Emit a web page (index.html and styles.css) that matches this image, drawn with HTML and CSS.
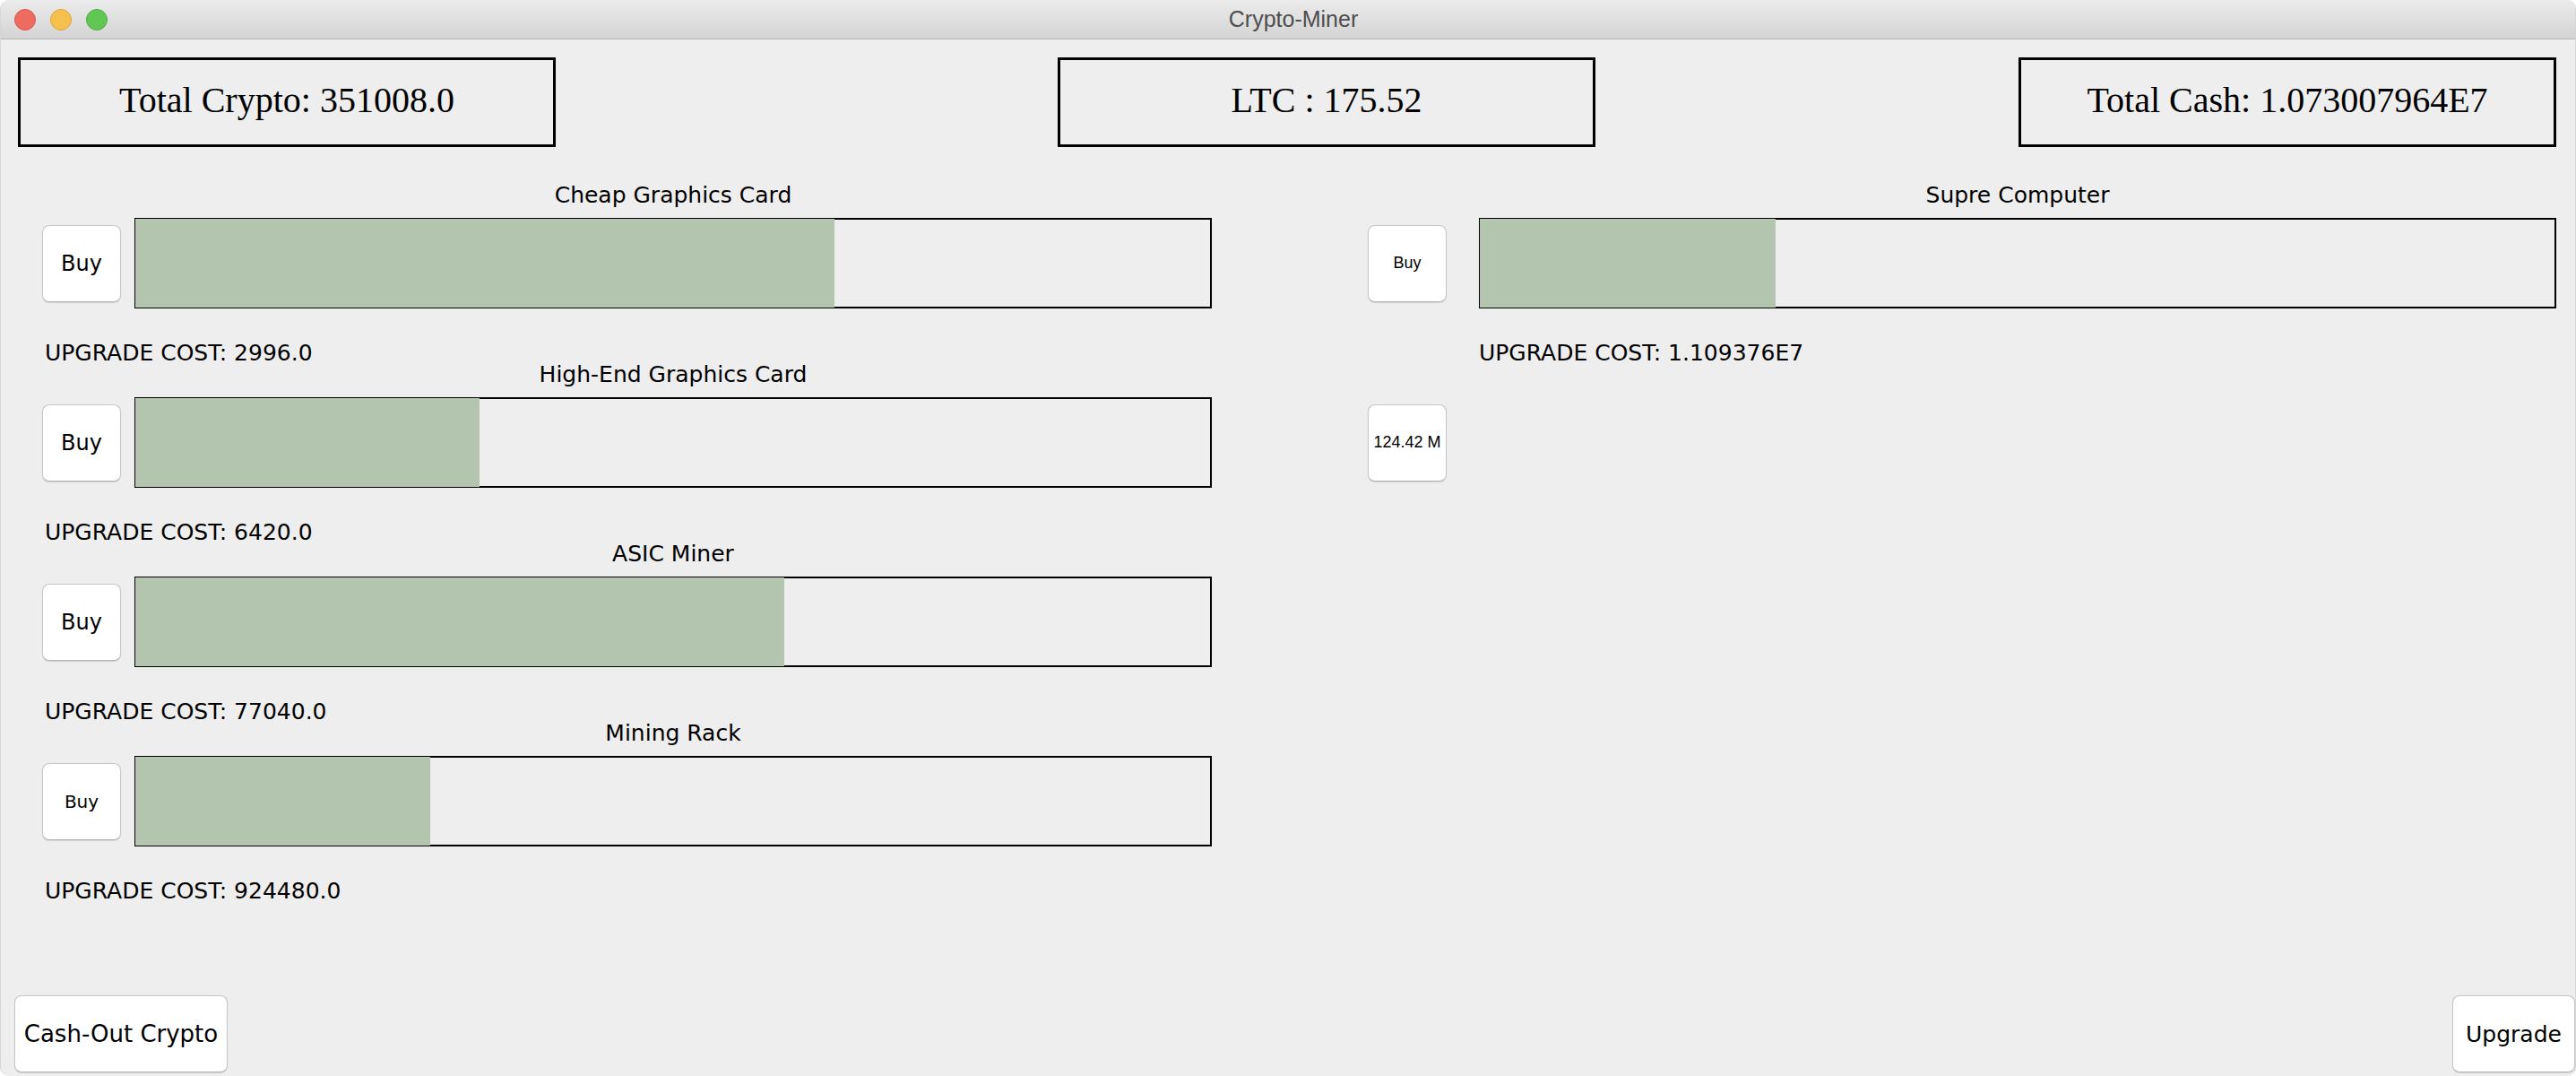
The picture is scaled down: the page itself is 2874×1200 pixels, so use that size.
FILE: index.html
```html
<!DOCTYPE html>
<html>
<head>
<meta charset="utf-8">
<title>Crypto-Miner</title>
<link rel="stylesheet" href="styles.css">
</head>
<body>
<div class="window">
  <header class="titlebar">
    <div class="lights">
      <span class="light red"></span>
      <span class="light yellow"></span>
      <span class="light green"></span>
    </div>
    <div class="title">Crypto-Miner</div>
    <div></div>
  </header>
  <div class="content">
    <div class="stats">
      <div class="stat">Total Crypto: 351008.0</div>
      <div class="stat stat-ltc">LTC : 175.52</div>
      <div class="stat stat-cash">Total Cash: 1.073007964E7</div>
    </div>
    <div class="main">
      <div class="col col-left">
        <div class="unit">
          <div class="unit-title">Cheap Graphics Card</div>
          <div class="unit-body">
            <button class="btn buy">Buy</button>
            <div class="bar"><div class="fill" style="width:65%"></div></div>
          </div>
          <div class="unit-cost">UPGRADE COST: 2996.0</div>
        </div>
        <div class="unit">
          <div class="unit-title">High-End Graphics Card</div>
          <div class="unit-body">
            <button class="btn buy">Buy</button>
            <div class="bar"><div class="fill" style="width:32%"></div></div>
          </div>
          <div class="unit-cost">UPGRADE COST: 6420.0</div>
        </div>
        <div class="unit">
          <div class="unit-title">ASIC Miner</div>
          <div class="unit-body">
            <button class="btn buy">Buy</button>
            <div class="bar"><div class="fill" style="width:60.3%"></div></div>
          </div>
          <div class="unit-cost">UPGRADE COST: 77040.0</div>
        </div>
        <div class="unit">
          <div class="unit-title">Mining Rack</div>
          <div class="unit-body">
            <button class="btn buy buy-small">Buy</button>
            <div class="bar"><div class="fill" style="width:27.4%"></div></div>
          </div>
          <div class="unit-cost">UPGRADE COST: 924480.0</div>
        </div>
      </div>
      <div class="col col-right">
        <div class="unit">
          <div class="unit-title">Supre Computer</div>
          <div class="unit-body">
            <button class="btn buy buy-sans">Buy</button>
            <div class="bar"><div class="fill" style="width:27.5%"></div></div>
          </div>
          <div class="unit-cost">UPGRADE COST: 1.109376E7</div>
        </div>
        <div class="unit">
          <div class="unit-title"></div>
          <div class="unit-body">
            <button class="btn buy buy-sans">124.42 M</button>
          </div>
        </div>
      </div>
    </div>
    <div class="footer">
      <button class="btn big cash">Cash-Out Crypto</button>
      <button class="btn big upgrade">Upgrade</button>
    </div>
  </div>
</div>
</body>
</html>
```
FILE: styles.css
```css
html, body {
  margin: 0;
  padding: 0;
}
body {
  background: #ffffff;
  width: 2874px;
  height: 1200px;
  overflow: hidden;
}
.window {
  width: 2874px;
  height: 1200px;
  box-sizing: border-box;
  background: #eeeeee;
  border-radius: 10px;
  overflow: hidden;
  display: flex;
  flex-direction: column;
  border-left: 1px solid #d6d6d6;
  border-right: 1px solid #d6d6d6;
}
.titlebar {
  height: 44px;
  box-sizing: border-box;
  flex: none;
  display: grid;
  grid-template-columns: 1fr auto 1fr;
  align-items: center;
  background: linear-gradient(#ebebeb, #d4d4d4);
  border-bottom: 1px solid #b4b4b4;
}
.lights {
  display: flex;
  gap: 16px;
  padding-left: 15px;
}
.light {
  width: 24px;
  height: 24px;
  box-sizing: border-box;
  border-radius: 50%;
}
.red { background: #ee6b60; border: 1px solid #d9574d; }
.yellow { background: #f6c04f; border: 1px solid #dea43a; }
.green { background: #62c655; border: 1px solid #4ead42; }
.title {
  font-family: "Liberation Sans", Arial, sans-serif;
  font-size: 25px;
  color: #4d4d4d;
  padding-left: 12px;
}
.content {
  flex: 1;
  display: flex;
  flex-direction: column;
}
.stats {
  display: flex;
  margin-top: 20px;
  padding-left: 19px;
}
.stat {
  width: 600px;
  height: 100px;
  box-sizing: border-box;
  border: 3px solid #000;
  padding-bottom: 6px;
  display: flex;
  align-items: center;
  justify-content: center;
  font-family: "Liberation Serif", "Times New Roman", serif;
  font-size: 40px;
  color: #000;
}
.stat-ltc {
  margin-left: 560px;
}
.stat-cash {
  margin-left: 472px;
}
.main {
  display: flex;
  margin-top: 42px;
  padding-left: 46px;
}
.col-left {
  width: 1305px;
}
.col-right {
  margin-left: 174px;
  width: 1326px;
}
.unit {
  font-family: "DejaVu Sans", Verdana, sans-serif;
  font-size: 25px;
  color: #000;
}
.unit-title {
  height: 24px;
  line-height: 24px;
  width: 1202px;
  margin-left: 103px;
  text-align: center;
  white-space: nowrap;
}
.col-right .unit-title {
  margin-left: 124px;
}
.unit-body {
  margin-top: 13px;
  height: 101px;
  display: flex;
  align-items: center;
  gap: 15px;
}
.col-right .unit-body {
  gap: 36px;
}
.unit-cost {
  margin-top: 38px;
  height: 24px;
  line-height: 24px;
  padding-left: 3px;
  white-space: nowrap;
}
.col-right .unit-cost {
  padding-left: 124px;
}
.bar {
  width: 1202px;
  height: 101px;
  box-sizing: border-box;
  border: 1px solid #000;
  box-shadow: inset 0 0 0 1px #000;
  background: #eeeeee;
}
.fill {
  height: 100%;
  background: #b3c4af;
}
.btn {
  background: #ffffff;
  border: 1px solid #c6c6c6;
  border-bottom-color: #b4b4b4;
  border-radius: 8px;
  box-shadow: 0 1px 1px rgba(0, 0, 0, 0.12);
  color: #000;
  padding: 0;
  margin: 0;
  font-family: "DejaVu Sans", Verdana, sans-serif;
  font-size: 24px;
  flex: none;
}
.buy {
  width: 88px;
  height: 86px;
}
.buy-small {
  font-size: 20px;
}
.buy-sans {
  font-family: "Liberation Sans", Arial, sans-serif;
  font-size: 18px;
}
.footer {
  margin-top: auto;
  display: flex;
  justify-content: space-between;
  padding: 0 0 4px 15px;
}
.big {
  height: 86px;
  font-size: 26px;
}
.cash {
  width: 238px;
}
.upgrade {
  width: 137px;
  font-size: 25px;
}
```
